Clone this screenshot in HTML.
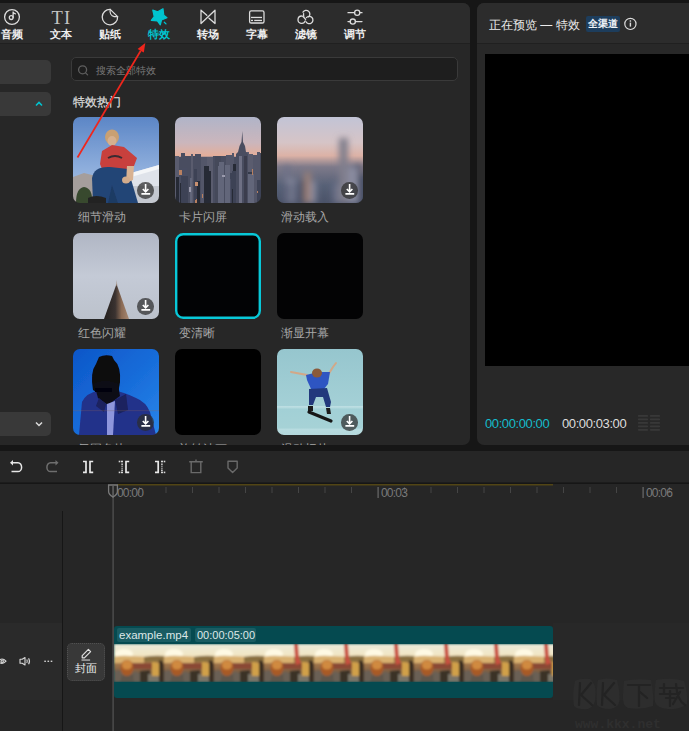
<!DOCTYPE html>
<html><head><meta charset="utf-8">
<style>
*{margin:0;padding:0;box-sizing:border-box}
html,body{width:689px;height:731px;overflow:hidden;background:#161616;font-family:"Liberation Sans",sans-serif;color:#fff}
.a{position:absolute}
#lp{left:-8px;top:3px;width:478px;height:442px;background:#272727;border-radius:7px;overflow:hidden}
#tabs{left:0;top:0;width:478px;height:41px;background:#2c2c2c;border-bottom:1px solid #202020}
.lbl{position:absolute;top:25px;width:40px;margin-left:-20px;text-align:center;font-size:10.5px;line-height:13px;font-weight:bold;color:#f0f0f0;white-space:nowrap}
#rp{left:477px;top:3px;width:220px;height:442px;background:#282828;border-radius:7px;overflow:hidden}
#tb{left:0;top:451px;width:689px;height:32px;background:#262626;border-bottom:1px solid #1c1c1c}
#tl{left:0;top:484px;width:689px;height:247px;background:#262626;overflow:hidden}
.side{position:absolute;left:0;width:59px;height:24px;background:#393939;border-radius:5px}
.th{position:absolute;width:86px;height:86px;border-radius:7px;overflow:hidden}
.tlb{position:absolute;font-size:11.5px;line-height:14px;color:#a8a8a8;white-space:nowrap;margin-top:2px}
.fr{position:absolute;top:0;width:50px;height:38px;background:radial-gradient(ellipse 30px 14px at 18px 8px,#fff2b0,rgba(255,220,120,0) 100%),linear-gradient(180deg,#e8dca0 0%,#d8b870 25%,#a86a30 45%,#5a3a28 70%,#7a6a60 100%)}
.dl{position:absolute;width:16.5px;height:16.5px;border-radius:50%;background:rgba(45,45,45,.72)}
</style></head><body>
<div id="lp" class="a">
  <div id="tabs" class="a">
    <!-- icons positioned in page coords: offset +8 since panel left is -8 -->
    <svg class="a" style="left:0;top:0" width="478" height="41" viewBox="-8 3 478 41">
      <g fill="none" stroke="#dcdcdc" stroke-width="1.3" stroke-linecap="round" stroke-linejoin="round">
        <!-- audio -->
        <circle cx="12" cy="17" r="7.4"/>
        <circle cx="11.2" cy="17.6" r="1.9"/>
        <path d="M13.1 17.6V12c0.6 0.9 1.4 1.5 2.3 1.8"/>
        <!-- sticker -->
        <path d="M110.2 9.4A7.7 7.7 0 1 0 117.6 16.6Z"/>
        <path d="M110.2 9.4c-0.6 3.4 0.9 6.6 4 7.2c1.2 0.2 2.2 0.1 3.4 0"/>
        <!-- transition -->
        <path d="M201 10.2V23.5L215 10.2V23.5L209 18.2M201 10.2L206.8 15.3"/>
        <!-- subtitle -->
        <rect x="249.6" y="10.8" width="14.4" height="12.2" rx="1.6"/>
        <!-- filter -->
        <path d="M303 12.2A3.7 3.7 0 1 1 308.6 16.9"/>
        <path d="M305.2 20.9A3.7 3.7 0 1 1 301.6 16"/>
        <path d="M306.4 17.6A3.7 3.7 0 1 1 306 21.8"/>
        <path d="M302.6 16.2Q304.4 17.6 305.6 19.4"/>
        <path d="M303.6 13.6Q303.4 15.2 303.8 16.4"/>
        <!-- sliders -->
        <path d="M348 12.7H354.6M359.8 12.7H362"/>
        <circle cx="357.2" cy="12.7" r="2.6"/>
        <path d="M348 21.6H350.2M355.4 21.6H362"/>
        <circle cx="352.8" cy="21.6" r="2.6"/>
      </g>
      <g fill="#dcdcdc">
        <rect x="251" y="16.8" width="11" height="1.3"/>
        <rect x="251" y="19.8" width="2" height="1.3"/>
        <rect x="254.2" y="19.8" width="7.8" height="1.3"/>
      </g>
      <text x="61.5" y="23.6" text-anchor="middle" font-family="Liberation Serif" font-size="18.5" fill="#c4c4c4" letter-spacing="1.2">TI</text>
      <!-- star -->
      <path d="M152.8 10.1L157.7 11.8L163 8.7L163.8 15.3L167 17.7L161.5 20L160.3 24.9L157.4 20.9L151.3 20.3L154.2 16.5Z" fill="#00c3cf" stroke="#00c3cf" stroke-width="1.2" stroke-linejoin="round"/>
      <path d="M164.3 22.2L166 23.9" stroke="#00c3cf" stroke-width="1.3" stroke-linecap="round"/>
    </svg>
    <div class="lbl" style="left:20px">音频</div>
    <div class="lbl" style="left:69px">文本</div>
    <div class="lbl" style="left:118px">贴纸</div>
    <div class="lbl" style="left:167px;color:#00c3cf">特效</div>
    <div class="lbl" style="left:216px">转场</div>
    <div class="lbl" style="left:265px">字幕</div>
    <div class="lbl" style="left:314px">滤镜</div>
    <div class="lbl" style="left:363px">调节</div>
  </div>
  <!-- sidebar (page x offset +8) -->
  <div class="side" style="top:57px"></div>
  <div class="side" style="top:89px"></div>
  <svg class="a" style="left:42px;top:97px" width="10" height="8"><path d="M2 5.5L5 2.5L8 5.5" fill="none" stroke="#00c3cf" stroke-width="1.6"/></svg>
  <div class="side" style="top:409px"></div>
  <svg class="a" style="left:42px;top:417px" width="10" height="8"><path d="M2 2.5L5 5.5L8 2.5" fill="none" stroke="#dcdcdc" stroke-width="1.5"/></svg>
  <!-- search -->
  <div class="a" style="left:79px;top:54px;width:387px;height:24px;background:#1e1e1e;border:1px solid #3a3a3a;border-radius:5px"></div>
  <svg class="a" style="left:84px;top:60px" width="14" height="14"><circle cx="6.6" cy="6.8" r="4" fill="none" stroke="#5e5e5e" stroke-width="1.3"/><path d="M9.6 9.8L11.6 11.8" stroke="#5e5e5e" stroke-width="1.2" stroke-linecap="round"/></svg>
  <div class="a" style="left:104px;top:61px;font-size:10px;line-height:13px;color:#7a7a7a">搜索全部特效</div>
  <div class="a" style="left:81px;top:92px;font-size:12px;line-height:14px;color:#dcdcdc;-webkit-text-stroke:0.25px #dcdcdc">特效热门</div>
  <!-- thumbs: page coords minus (-8,3) -->
  <svg class="a" style="left:81px;top:114px" width="290" height="318" viewBox="73 117 290 318">
  <defs>
    <filter id="b1" x="-10%" y="-10%" width="120%" height="120%"><feGaussianBlur stdDeviation="0.6"/></filter>
    <filter id="b4" x="-20%" y="-20%" width="140%" height="140%"><feGaussianBlur stdDeviation="3"/></filter>
    <clipPath id="c1"><rect x="73" y="117" width="86" height="86" rx="7"/></clipPath>
    <clipPath id="c2"><rect x="175" y="117" width="86" height="86" rx="7"/></clipPath>
    <clipPath id="c3"><rect x="277" y="117" width="86" height="86" rx="7"/></clipPath>
    <clipPath id="c4"><rect x="73" y="233" width="86" height="86" rx="7"/></clipPath>
    <clipPath id="c7"><rect x="73" y="349" width="86" height="86" rx="7"/></clipPath>
    <clipPath id="c9"><rect x="277" y="349" width="86" height="86" rx="7"/></clipPath>
    <linearGradient id="sky1" x1="0" y1="0" x2="0" y2="1"><stop offset="0" stop-color="#5c86c6"/><stop offset=".6" stop-color="#8eaedc"/><stop offset="1" stop-color="#b4c6e0"/></linearGradient>
    <linearGradient id="sky2" x1="0" y1="0" x2="0" y2="1"><stop offset="0" stop-color="#b0b4c8"/><stop offset=".3" stop-color="#cbb6bc"/><stop offset=".45" stop-color="#e4ae9a"/><stop offset=".47" stop-color="#8a7e88"/><stop offset=".6" stop-color="#4a5064"/><stop offset="1" stop-color="#343a4a"/></linearGradient>
    <linearGradient id="sky3" x1="0" y1="0" x2="0" y2="1"><stop offset="0" stop-color="#c2c4d6"/><stop offset=".3" stop-color="#d6c4c6"/><stop offset=".45" stop-color="#dcb2a6"/><stop offset=".58" stop-color="#7e7a8a"/><stop offset=".8" stop-color="#566076"/><stop offset="1" stop-color="#4a5268"/></linearGradient>
    <linearGradient id="sk4" x1="0" y1="0" x2="0" y2="1"><stop offset="0" stop-color="#b0b6c4"/><stop offset=".5" stop-color="#c4cad6"/><stop offset="1" stop-color="#bcc2cc"/></linearGradient>
    <linearGradient id="sk9" x1="0" y1="0" x2="0" y2="1"><stop offset="0" stop-color="#96c6ce"/><stop offset=".66" stop-color="#a4d0d6"/><stop offset=".67" stop-color="#c0e0e4"/><stop offset=".7" stop-color="#a2d0d6"/><stop offset=".92" stop-color="#a6d2d6"/><stop offset=".93" stop-color="#b8dce0"/><stop offset="1" stop-color="#b4d8dc"/></linearGradient>
    <linearGradient id="cone" x1="0" y1="0" x2="1" y2="0"><stop offset="0" stop-color="#24201e"/><stop offset=".45" stop-color="#3a3230"/><stop offset=".7" stop-color="#8a6a54"/><stop offset="1" stop-color="#a88a74"/></linearGradient>
    <linearGradient id="bl7" x1="0" y1="0" x2="1" y2="1"><stop offset="0" stop-color="#0c56c8"/><stop offset=".6" stop-color="#1a70dc"/><stop offset="1" stop-color="#2a86ea"/></linearGradient>
  </defs>
  <!-- thumb 1 -->
  <g clip-path="url(#c1)"><g filter="url(#b1)">
    <rect x="73" y="117" width="86" height="86" fill="url(#sky1)"/>
    <path d="M73 177L84 173L96 176V203H73Z" fill="#a59e9c"/>
    <path d="M124 175L159 165V203H124Z" fill="#dfe3ea"/>
    <path d="M124 175L159 165V169L124 179Z" fill="#f4f6f8"/>
    <path d="M124 186H159V203H124Z" fill="#c4c8d0"/>
    <path d="M76 203Q76 188 84 187Q93 188 92 203Z" fill="#37482f"/>
    <ellipse cx="112" cy="137" rx="7" ry="7.5" fill="#c9a072"/>
    <ellipse cx="112" cy="141" rx="4.5" ry="5" fill="#d6b08e"/>
    <path d="M102 151L112 145L124 147L137 158L134 166L128 166L127 174L105 176L100 164Z" fill="#c8403c"/>
    <path d="M108 158Q115 154 122 158" stroke="#3a2a30" stroke-width="2" fill="none"/>
    <path d="M92 178Q94 166 110 167L128 169L138 203H93Z" fill="#234576"/><path d="M112 185L118 203H108Z" fill="#1e3a64"/><path d="M88 198Q96 194 106 198L106 203H88Z" fill="#222"/>
    <path d="M127 166L134 166L133 180L126 183Z" fill="#d8b292"/>
    <ellipse cx="126" cy="180" rx="4" ry="3.5" fill="#d2ac8c"/>
  </g></g>
  <!-- thumb 2 -->
  <g clip-path="url(#c2)"><g filter="url(#b1)">
    <rect x="175" y="117" width="86" height="86" fill="url(#sky2)"/>
    <rect x="175" y="156" width="4" height="47" fill="#5a5c6e"/><rect x="179" y="157" width="2" height="46" fill="#4a4e60"/><rect x="181" y="153" width="4" height="50" fill="#4a4e60"/><rect x="185" y="156" width="6" height="47" fill="#4a4e60"/><rect x="191" y="154" width="2" height="49" fill="#5a5c6e"/><rect x="193" y="156" width="2" height="47" fill="#4a4e60"/><rect x="195" y="154" width="6" height="49" fill="#4a4e60"/><rect x="201" y="157" width="6" height="46" fill="#535669"/><rect x="207" y="157" width="6" height="46" fill="#5a5c6e"/><rect x="213" y="156" width="2" height="47" fill="#4a4e60"/><rect x="215" y="156" width="6" height="47" fill="#44485a"/><rect x="221" y="156" width="5" height="47" fill="#4a4e60"/><rect x="226" y="155" width="6" height="48" fill="#535669"/><rect x="232" y="153" width="2" height="50" fill="#535669"/><rect x="234" y="157" width="4" height="46" fill="#4a4e60"/><rect x="238" y="157" width="6" height="46" fill="#535669"/><rect x="244" y="152" width="5" height="51" fill="#5a5c6e"/><rect x="249" y="154" width="4" height="49" fill="#5a5c6e"/><rect x="253" y="155" width="4" height="48" fill="#535669"/><rect x="257" y="152" width="3" height="51" fill="#535669"/><rect x="260" y="153" width="2" height="50" fill="#44485a"/><rect x="238" y="190" width="6" height="13" fill="#4a4e62"/><rect x="232" y="171" width="7" height="32" fill="#262a36"/><rect x="190" y="178" width="2" height="25" fill="#62667a"/><rect x="218" y="166" width="3" height="37" fill="#62667a"/><rect x="180" y="183" width="5" height="20" fill="#262a36"/><rect x="246" y="180" width="8" height="23" fill="#4a4e62"/><rect x="219" y="181" width="4" height="22" fill="#62667a"/><rect x="233" y="164" width="6" height="39" fill="#262a36"/><rect x="235" y="184" width="4" height="19" fill="#3c4254"/><rect x="182" y="185" width="2" height="18" fill="#3c4254"/><rect x="257" y="180" width="4" height="23" fill="#3c4254"/><rect x="232" y="171" width="8" height="32" fill="#3c4254"/><rect x="219" y="162" width="5" height="41" fill="#62667a"/><rect x="196" y="181" width="4" height="22" fill="#262a36"/><rect x="182" y="168" width="5" height="35" fill="#4a4e62"/><rect x="206" y="174" width="3" height="29" fill="#62667a"/><rect x="238" y="164" width="8" height="39" fill="#363b4c"/><rect x="226" y="179" width="5" height="24" fill="#4a4e62"/><rect x="230" y="189" width="3" height="14" fill="#262a36"/><rect x="228" y="173" width="4" height="30" fill="#3c4254"/><rect x="204" y="166" width="5" height="37" fill="#262a36"/><rect x="194" y="169" width="3" height="34" fill="#3c4254"/><rect x="176" y="177" width="3" height="26" fill="#262a36"/><rect x="208" y="171" width="3" height="32" fill="#262a36"/><rect x="228" y="179" width="3" height="24" fill="#4a4e62"/><rect x="247" y="172" width="6" height="31" fill="#363b4c"/><rect x="240" y="181" width="7" height="22" fill="#3c4254"/><rect x="181" y="176" width="7" height="27" fill="#3c4254"/><rect x="246" y="174" width="8" height="29" fill="#62667a"/><rect x="225" y="165" width="5" height="38" fill="#62667a"/><rect x="257" y="191" width="1" height="2" fill="#b88060"/><rect x="202" y="194" width="1" height="4" fill="#b88060"/><rect x="252" y="169" width="1" height="6" fill="#b88060"/><rect x="195" y="200" width="2" height="6" fill="#b88060"/><rect x="179" y="170" width="3" height="5" fill="#b88060"/><rect x="195" y="182" width="3" height="4" fill="#c89070"/><rect x="236" y="173" width="2" height="5" fill="#b88060"/><rect x="237" y="196" width="1" height="3" fill="#c89070"/><rect x="189" y="187" width="2" height="5" fill="#9a9aac"/><rect x="196" y="199" width="1" height="6" fill="#b88060"/><rect x="222" y="175" width="3" height="2" fill="#9a9aac"/><rect x="243" y="185" width="1" height="7" fill="#9a9aac"/><path d="M242.3 131L243 142L245 146L246 152L248 154V203H236V154L238 152L239.5 146L241.5 142Z" fill="#4a4e60"/><rect x="239" y="156" width="3" height="47" fill="#6e7084"/><rect x="244" y="156" width="3" height="47" fill="#3a3e4e"/>
  </g></g>
<!-- thumb 3 -->
  <g clip-path="url(#c3)">
    <rect x="277" y="117" width="86" height="86" fill="url(#sky3)"/>
    <g filter="url(#b4)"><rect x="348" y="179" width="12" height="24" fill="#424a60"/><rect x="300" y="181" width="8" height="22" fill="#424a60"/><rect x="289" y="179" width="7" height="24" fill="#8a8ca0"/><rect x="288" y="182" width="7" height="21" fill="#5a6078"/><rect x="334" y="185" width="11" height="18" fill="#8c7a80"/><rect x="356" y="165" width="7" height="38" fill="#8c7a80"/><rect x="284" y="166" width="6" height="37" fill="#6e7288"/><rect x="353" y="165" width="8" height="38" fill="#424a60"/><rect x="333" y="183" width="10" height="20" fill="#6e7288"/><rect x="358" y="174" width="8" height="29" fill="#424a60"/><rect x="287" y="179" width="5" height="24" fill="#8a8ca0"/><rect x="347" y="167" width="11" height="36" fill="#8a8ca0"/><rect x="306" y="181" width="10" height="22" fill="#8a8ca0"/><rect x="285" y="183" width="5" height="20" fill="#5a6078"/><rect x="339" y="138" width="9" height="65" fill="#807e8c"/><rect x="304" y="172" width="7" height="31" fill="#9a8078"/></g>
  </g>
<!-- thumb 4 -->
  <g clip-path="url(#c4)">
    <rect x="73" y="233" width="86" height="86" fill="url(#sk4)"/>
    <path d="M116.5 284L104 319H129Z" fill="url(#cone)"/>
    <path d="M116.5 280L117.5 286L115.8 286Z" fill="#a08878" opacity=".6"/>
  </g>
  <!-- thumb 5 & 6 & 8 -->
  <rect x="176.2" y="234.2" width="83.6" height="83.6" rx="7" fill="#020305" stroke="#08c8d8" stroke-width="2.4"/>
  <rect x="277" y="233" width="86" height="86" rx="7" fill="#030304"/>
  <rect x="175" y="349" width="86" height="86" rx="7" fill="#000"/>
  <!-- thumb 7 -->
  <g clip-path="url(#c7)"><g filter="url(#b1)">
    <rect x="73" y="349" width="86" height="86" fill="url(#bl7)"/>
    <path d="M99 357Q105 354 112 356L114 360Q121 366 120 382L118 394L106 398L93 390Q90 372 96 364Z" fill="#08080e"/>
    <path d="M79 435L82 402Q86 393 100 390L112 390Q124 392 136 398Q146 402 150 412L156 435Z" fill="#23308a"/>
    <path d="M94 384Q104 378 118 384L120 396L108 405L98 398Z" fill="#101018"/>
    <path d="M95 388H112V392H95Z" fill="#050508"/>
    <path d="M107 404L115 401L113 435H107Z" fill="#8e96dc"/>
    <path d="M115 400L126 394L128 410L118 414Z" fill="#1a225e"/>
    <path d="M99 398L106 404L104 412L96 406Z" fill="#1a225e"/>
    <rect x="73" y="410.5" width="86" height="0.6" fill="#8a6a58" opacity=".5"/>
  </g></g>
  <!-- thumb 9 -->
  <g clip-path="url(#c9)"><g filter="url(#b1)">
    <rect x="277" y="349" width="86" height="86" fill="url(#sk9)"/>
    <path d="M291 372L307 375L310 379M328 375L333 367L336 363" stroke="#d2a888" stroke-width="2" fill="none" stroke-linecap="round"/>
    <path d="M306 375L318 372L330 372L328 384L324 389H311L307 380Z" fill="#2f54c2"/>
    <ellipse cx="317" cy="373" rx="5" ry="4.5" fill="#8a5a3a"/>
    <path d="M309 389L327 388L331 402L330 407L326 407L323 397L316 397L313 405L309 405Z" fill="#22397c"/>
    <path d="M308 406L313 406L313 411L308 411ZM326 408L330 408L331 414L327 414Z" fill="#1a1a1a"/>
    <path d="M309 412L331 421" stroke="#181818" stroke-width="3.2" stroke-linecap="round"/>
  </g></g>
</svg>
<div class="dl" style="left:145px;top:179px"></div>
  <div class="dl" style="left:349px;top:179px"></div>
  <div class="dl" style="left:145px;top:295px"></div>
  <div class="dl" style="left:145px;top:411px"></div>
  <div class="dl" style="left:349px;top:411px"></div>
  <div class="tlb" style="left:86px;top:205px">细节滑动</div>
  <div class="tlb" style="left:187px;top:205px">卡片闪屏</div>
  <div class="tlb" style="left:289px;top:205px">滑动载入</div>
  <div class="tlb" style="left:86px;top:321px">红色闪耀</div>
  <div class="tlb" style="left:187px;top:321px">变清晰</div>
  <div class="tlb" style="left:289px;top:321px">渐显开幕</div>
  <div class="tlb" style="left:86px;top:437px">氛围色块</div>
  <div class="tlb" style="left:187px;top:437px">旋转油画</div>
  <div class="tlb" style="left:289px;top:437px">滑动切片</div>
</div>
<!-- download glyphs -->
<svg class="a" style="left:0;top:0" width="689" height="460">
  <g stroke="#fff" stroke-width="1.6" fill="none"><path d="M145.6 184.1V191.7M142.8 189.0L145.6 191.8L148.4 189.0M141.4 193.9H150.2"/><path d="M349.6 184.1V191.7M346.8 189.0L349.6 191.8L352.4 189.0M345.4 193.9H354.2"/><path d="M145.6 300.1V307.7M142.8 305.0L145.6 307.8L148.4 305.0M141.4 309.9H150.2"/><path d="M145.6 416.1V423.7M142.8 421.0L145.6 423.8L148.4 421.0M141.4 425.9H150.2"/><path d="M349.6 416.1V423.7M346.8 421.0L349.6 423.8L352.4 421.0M345.4 425.9H354.2"/></g>
  <!-- red arrow -->
  <path d="M77.5 157.5L140.7 50.7" stroke="#f0261c" stroke-width="1.7"/>
  <path d="M145.3 43.0L137.6 48.9L143.8 52.6Z" fill="#f0261c"/>
</svg>
<div id="rp" class="a">
  <div class="a" style="left:0;top:0;width:220px;height:41px;background:#2c2c2c;border-bottom:1px solid #202020"></div>
  <div class="a" style="left:12px;top:15px;font-size:12px;line-height:14px;color:#ececec;white-space:nowrap">正在预览 — 特效</div>
  <div class="a" style="left:109px;top:13px;width:34px;height:16px;background:#1d3d5c;border-radius:2px;font-size:10px;line-height:16px;color:#f0f4f8;text-align:center;font-weight:bold">全渠道</div>
  <svg class="a" style="left:147px;top:14px" width="14" height="14"><circle cx="6.4" cy="6.9" r="5.6" fill="none" stroke="#dcdcdc" stroke-width="1.2"/><rect x="5.7" y="5.6" width="1.4" height="4" fill="#dcdcdc"/><rect x="5.7" y="3.3" width="1.4" height="1.4" fill="#dcdcdc"/></svg><svg class="a" style="left:161px;top:412px" width="24" height="18"><g fill="#383838"><rect x="0" y="0.00" width="10" height="1.8" rx=".6"/><rect x="12" y="0.00" width="10" height="1.8" rx=".6"/><rect x="0" y="3.47" width="10" height="1.8" rx=".6"/><rect x="12" y="3.47" width="10" height="1.8" rx=".6"/><rect x="0" y="6.94" width="10" height="1.8" rx=".6"/><rect x="12" y="6.94" width="10" height="1.8" rx=".6"/><rect x="0" y="10.41" width="10" height="1.8" rx=".6"/><rect x="12" y="10.41" width="10" height="1.8" rx=".6"/><rect x="0" y="13.88" width="10" height="1.8" rx=".6"/><rect x="12" y="13.88" width="10" height="1.8" rx=".6"/></g></svg>
  <div class="a" style="left:8px;top:51px;width:220px;height:312px;background:#000"></div>
  <div class="a" style="left:8px;top:413px;font-size:13px;line-height:16px;letter-spacing:-0.4px;color:#14bccc;white-space:nowrap">00:00:00:00</div>
  <div class="a" style="left:85px;top:413px;font-size:13px;line-height:16px;letter-spacing:-0.4px;color:#dedede;white-space:nowrap">00:00:03:00</div>
</div>
<div id="tb" class="a">
  <svg class="a" style="left:0;top:0" width="689" height="32" viewBox="0 451 689 32">
    <g fill="none" stroke-width="1.5" stroke-linejoin="round">
      <path d="M11.5 462.8H18a3.6 4.35 0 0 1 0 8.7H11.5" stroke="#e6e6e6"/>
      <path d="M57 462.8H50.5a3.6 4.35 0 0 0 0 8.7H57" stroke="#6e6e6e"/>
    </g>
    <path d="M10 462.8L13 460V465.6Z" fill="#e6e6e6"/>
    <path d="M58.5 462.8L55.5 460V465.6Z" fill="#6e6e6e"/>
    <g fill="none" stroke="#e8e8e8" stroke-width="1.7">
      <path d="M83 461.5H86V472.3H83M93.2 461.5H90V472.3H93.2"/>
      <path d="M129.2 461.5H126V472.3H129.2"/>
      <path d="M155 461.5H158.2V472.3H155"/>
    </g>
    <g fill="#d8d8d8">
      <rect x="118.7" y="460.7" width="1.6" height="1.6"/><rect x="121" y="460.7" width="2" height="1.6"/>
      <rect x="118.7" y="471.6" width="1.6" height="1.6"/><rect x="121" y="471.6" width="2" height="1.6"/>
      <rect x="121.3" y="463.5" width="1.6" height="1.4"/><rect x="121.3" y="465.6" width="1.6" height="1.4" opacity=".6"/><rect x="121.3" y="467.6" width="1.6" height="1.4" opacity=".6"/><rect x="121.3" y="469.6" width="1.6" height="1.4"/>
      <rect x="163.7" y="460.7" width="1.6" height="1.6"/><rect x="161" y="460.7" width="2" height="1.6"/>
      <rect x="163.7" y="471.6" width="1.6" height="1.6"/><rect x="161" y="471.6" width="2" height="1.6"/>
      <rect x="161.1" y="463.5" width="1.6" height="1.4"/><rect x="161.1" y="465.6" width="1.6" height="1.4" opacity=".6"/><rect x="161.1" y="467.6" width="1.6" height="1.4" opacity=".6"/><rect x="161.1" y="469.6" width="1.6" height="1.4"/>
    </g>
    <g fill="none" stroke="#6a6a6a" stroke-width="1.4">
      <path d="M189.2 461.8H202.8M191.2 461.8V472.6H200.8V461.8M196 459.6V461.8"/>
      <path d="M228 461.2H237.2V468L232.6 472.6L228 468Z" stroke-linejoin="round"/>
    </g>
  </svg>
</div>
<div id="tl" class="a">
  <svg class="a" style="left:0;top:0" width="689" height="247" viewBox="0 484 689 247">
    <rect x="117" y="484.2" width="436" height="1.2" fill="#5e4e12"/>
    <rect x="112.5" y="487" width="1.2" height="11" fill="#6a6a6a"/><rect x="139.0" y="487" width="1" height="6" fill="#454545"/><rect x="165.5" y="487" width="1" height="6" fill="#454545"/><rect x="192.0" y="487" width="1" height="6" fill="#454545"/><rect x="218.5" y="487" width="1" height="6" fill="#454545"/><rect x="245.0" y="487" width="1" height="6" fill="#454545"/><rect x="271.5" y="487" width="1" height="6" fill="#454545"/><rect x="298.0" y="487" width="1" height="6" fill="#454545"/><rect x="324.5" y="487" width="1" height="6" fill="#454545"/><rect x="351.0" y="487" width="1" height="6" fill="#454545"/><rect x="377.5" y="487" width="1.2" height="11" fill="#6a6a6a"/><rect x="404.0" y="487" width="1" height="6" fill="#454545"/><rect x="430.5" y="487" width="1" height="6" fill="#454545"/><rect x="457.0" y="487" width="1" height="6" fill="#454545"/><rect x="483.5" y="487" width="1" height="6" fill="#454545"/><rect x="510.0" y="487" width="1" height="6" fill="#454545"/><rect x="536.5" y="487" width="1" height="6" fill="#454545"/><rect x="563.0" y="487" width="1" height="6" fill="#454545"/><rect x="589.5" y="487" width="1" height="6" fill="#454545"/><rect x="616.0" y="487" width="1" height="6" fill="#454545"/><rect x="642.5" y="487" width="1.2" height="11" fill="#6a6a6a"/><rect x="669.0" y="487" width="1" height="6" fill="#454545"/>
    <rect x="0" y="623" width="62" height="77" fill="#2a2a2a"/>
    <rect x="553" y="623" width="136" height="77" fill="#282828"/>
    <rect x="62" y="511" width="1" height="220" fill="#161616"/>
    <rect x="112.5" y="490" width="1.2" height="241" fill="#555"/>
    <path d="M108.6 485V491.5Q108.6 494.5 113 497Q117.4 494.5 117.4 491.5V485Z" fill="#262626" stroke="#7a7a7a" stroke-width="1.3"/>
    <rect x="112.5" y="486" width="1.1" height="10" fill="#7a7a7a"/>
  </svg>
  <div class="a" style="left:117px;top:2px;font-size:12px;line-height:14px;color:#7a7a7a;letter-spacing:-0.8px">00:00</div>
  <div class="a" style="left:381px;top:2px;font-size:12px;line-height:14px;color:#7a7a7a;letter-spacing:-0.8px">00:03</div>
  <div class="a" style="left:646px;top:2px;font-size:12px;line-height:14px;color:#7a7a7a;letter-spacing:-0.8px">00:06</div>
  <svg class="a" style="left:0;top:0" width="62" height="247" viewBox="0 484 62 247">
    <g fill="none" stroke="#d8d8d8" stroke-width="1.1">
      <path d="M-2 661.2Q2 656.8 6 661.2Q2 665.6 -2 661.2Z"/><circle cx="2.2" cy="661.2" r="1.2"/>
      <path d="M20 659.3H22.2L25 657.5V665L22.2 663.2H20Z" stroke-linejoin="round"/>
      <path d="M26.8 659.4Q27.8 661.2 26.8 663M28.6 658.2Q30.4 661.2 28.6 664.2"/>
    </g>
    <g fill="#cfcfcf"><rect x="44.3" y="660.6" width="1.6" height="1.4"/><rect x="47.5" y="660.6" width="1.6" height="1.4"/><rect x="50.7" y="660.6" width="1.6" height="1.4"/></g>
  </svg>
  <div class="a" style="left:67px;top:159px;width:38px;height:38px;background:#383838;border:1px dotted #505050;border-radius:5px"></div>
  <svg class="a" style="left:67px;top:159px" width="38" height="38" viewBox="67 643 38 38">
    <path d="M82.2 655.6L88.4 649.4L90.6 651.6L84.4 657.8H82.2Z" fill="none" stroke="#e0e0e0" stroke-width="1.2" stroke-linejoin="round"/>
    <rect x="81.5" y="659.4" width="8.6" height="1.3" fill="#bbb"/>
  </svg>
  <div class="a" style="left:67px;top:177px;width:38px;text-align:center;font-size:11px;line-height:14px;color:#f0f0f0">封面</div>
  <div id="clip" class="a" style="left:114px;top:142px;width:439px;height:72px;background:#054a50;border-radius:3px;overflow:hidden">
    <div class="a" style="left:3px;top:2px;width:74px;height:14px;background:#1a5c62;border-radius:2px;font-size:11.5px;line-height:14px;color:#dde8e8;padding-left:2px">example.mp4</div>
    <div class="a" style="left:81px;top:2px;width:61px;height:14px;background:#1a5c62;border-radius:2px;font-size:11px;line-height:14px;color:#dde8e8;padding-left:2px">00:00:05:00</div>
    <svg class="a" style="left:0;top:18px" width="439" height="38">
<defs>
<filter id="fb" x="-5%" y="-5%" width="110%" height="110%"><feGaussianBlur stdDeviation="0.01"/></filter><filter id="fb2" x="0" y="0" width="100%" height="100%"><feGaussianBlur stdDeviation="1.3"/></filter>
<linearGradient id="fsky" x1="0" y1="0" x2="0" y2="1"><stop offset="0" stop-color="#eceada"/><stop offset=".3" stop-color="#f2e6c4"/><stop offset=".45" stop-color="#b08050"/><stop offset="1" stop-color="#4a3e36"/></linearGradient>
<clipPath id="fc"><rect x="0" y="0" width="50" height="38"/></clipPath>
<g id="fa" clip-path="url(#fc)"><rect x="0" y="0" width="50" height="38" fill="url(#fsky)"/>
<ellipse cx="10" cy="10" rx="9" ry="5" fill="#fffbe6" opacity=".9"/>
<path d="M0 13Q8 11 16 12L30 13V19H0Z" fill="#d8b070"/>
<path d="M30 13Q40 11 50 12V18H30Z" fill="#8a7040"/>
<path d="M18 19H40V25H18Z" fill="#8a4a34"/>
<path d="M0 27Q8 25 18 27L26 29V38H0Z" fill="#6a6054"/>
<path d="M26 27L36 26V38H26Z" fill="#3a3028"/>
<path d="M34 30L46 31V38H34Z" fill="#7a7468"/>
<path d="M38 18Q46 17 47 24L45 32H38Z" fill="#d0a048"/>
<path d="M45 16Q50 16 50 22V38H45Z" fill="#3a2e22"/>
<ellipse cx="13" cy="24" rx="6.5" ry="8" fill="#a85a28"/>
<ellipse cx="13" cy="21" rx="5" ry="4.5" fill="#d08a40"/>
<path d="M8 31Q13 34 19 30L20 38H6Z" fill="#5e564c"/>
</g>
<g id="fbb" clip-path="url(#fc)"><rect x="0" y="0" width="50" height="38" fill="url(#fsky)"/>
<ellipse cx="10" cy="10" rx="9" ry="5" fill="#fffbe6" opacity=".9"/>
<path d="M0 13Q8 11 16 12L30 13V19H0Z" fill="#d8b070"/>
<path d="M30 13Q40 11 50 12V18H30Z" fill="#8a7040"/>
<path d="M18 19H40V25H18Z" fill="#8a4a34"/>
<path d="M0 27Q8 25 18 27L26 29V38H0Z" fill="#6a6054"/>
<path d="M26 27L36 26V38H26Z" fill="#3a3028"/>
<path d="M34 30L46 31V38H34Z" fill="#7a7468"/>
<path d="M38 18Q46 17 47 24L45 32H38Z" fill="#d0a048"/>
<path d="M45 16Q50 16 50 22V38H45Z" fill="#3a2e22"/>
<path d="M30 0H34L35 14L37 19L32 21L31 14Z" fill="#c85040"/><ellipse cx="13" cy="24" rx="6.5" ry="8" fill="#a85a28"/>
<ellipse cx="13" cy="21" rx="5" ry="4.5" fill="#d08a40"/>
<path d="M8 31Q13 34 19 30L20 38H6Z" fill="#5e564c"/>
</g>
</defs>
<g filter="url(#fb2)"><use href="#fa" x="0" y="0"/><use href="#fa" x="50" y="0"/><use href="#fa" x="100" y="0"/><use href="#fbb" x="150" y="0"/><use href="#fbb" x="200" y="0"/><use href="#fbb" x="250" y="0"/><use href="#fbb" x="300" y="0"/><use href="#fbb" x="350" y="0"/><use href="#fbb" x="400" y="0"/>
</g></svg>
  </div>
  <svg class="a" style="left:570px;top:192px" width="119" height="34" viewBox="570 676 119 34">
  <g fill="#2d2d2d">
    <path d="M575 681Q580 678 590 679Q596 683 595.5 694Q596 707 588 709Q578 710 574 706Q572 694 575 681Z"/>
    <path d="M598 680Q606 677 617 680Q620 690 619.5 700Q619 708 610 709Q600 709 597 705Q596 690 598 680Z"/>
    <path d="M624 681Q635 678 651 680Q654 694 653 706Q642 710 628 708Q622 706 623 694Z"/>
    <path d="M656 680Q672 677 684 681Q688 692 687 704Q680 710 668 709Q657 708 655 702Q654 690 656 680Z"/>
  </g>
  <g fill="none" stroke="#232323" stroke-width="2.2" stroke-linecap="round">
    <path d="M580 683L579 705M591 683L581 695L592 705"/>
    <path d="M603 683L602 705M614 683L604 695L615 705"/>
    <path d="M628 685H650M639 685V706M640 692L647 698"/>
    <path d="M660 688H683M664 684V694M660 694H676M666 698H674M670 691V706M676 684Q677 700 685 705M680 692L673 704"/>
  </g>
</svg>
<div class="a" style="left:575px;top:234px;font-family:'Liberation Mono',monospace;font-size:13px;line-height:14px;font-weight:bold;color:#2f2f2f;white-space:nowrap">www.kkx.net</div>
</div>
</body></html>
